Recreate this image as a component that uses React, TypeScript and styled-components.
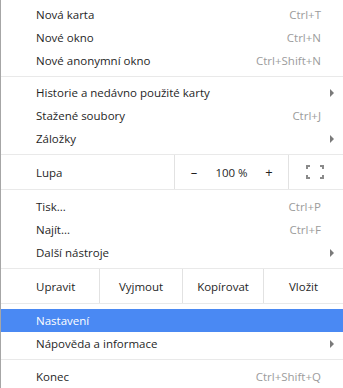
import React from "react";
import styled, { createGlobalStyle } from "styled-components";

const GlobalStyle = createGlobalStyle`
  html, body {
    margin: 0;
    padding: 0;
    background: #ffffff;
  }
  body {
    font-family: "Open Sans", "Noto Sans", sans-serif;
  }
`;

const Menu = styled.div`
  width: 343px;
  height: 388px;
  box-sizing: border-box;
  border-left: 1px solid #a6a6a6;
  background: #ffffff;
  padding-top: 3px;
  font-size: 11.5px;
  color: #1f1f1f;
  overflow: hidden;
`;

const Item = styled.div<{ $active?: boolean }>`
  display: flex;
  align-items: center;
  height: 23px;
  padding: 0 9px 0 35px;
  background: ${(p) => (p.$active ? "#4a89f3" : "transparent")};
  color: ${(p) => (p.$active ? "#ffffff" : "#1f1f1f")};
`;

const Label = styled.span`
  flex: 1;
  white-space: nowrap;
`;

const Shortcut = styled.span`
  color: #9c9c9c;
  margin-right: 13px;
  white-space: nowrap;
`;

const Arrow = styled.span`
  width: 0;
  height: 0;
  border-top: 4px solid transparent;
  border-bottom: 4px solid transparent;
  border-left: 4px solid #7a7a7a;
`;

const Separator = styled.div<{ $gap?: number }>`
  height: 1px;
  background: #e9e9e9;
  margin: 4px 0 ${(p) => p.$gap ?? 4}px;
`;

const ControlRow = styled.div`
  display: flex;
  align-items: stretch;
  height: 34px;
  border-top: 1px solid #e9e9e9;
  border-bottom: 1px solid #e9e9e9;
  margin: 4px 0 5px;
`;

const ControlLabel = styled.div<{ $w: number }>`
  width: ${(p) => p.$w}px;
  flex-shrink: 0;
  display: flex;
  align-items: center;
  padding-left: 35px;
  box-sizing: border-box;
`;

const ZoomBox = styled.div`
  display: flex;
  align-items: center;
  width: 115px;
  border-left: 1px solid #e2e2e2;
  border-right: 1px solid #e2e2e2;
  box-sizing: border-box;
`;

const ZoomButton = styled.span`
  width: 38px;
  text-align: center;
  font-size: 13px;
`;

const ZoomValue = styled.span`
  flex: 1;
  text-align: center;
`;

const FullscreenCell = styled.div`
  flex: 1;
  display: flex;
  align-items: center;
  justify-content: center;
  padding-right: 2px;
`;

const EditCell = styled.div<{ $w: number }>`
  width: ${(p) => p.$w}px;
  flex-shrink: 0;
  display: flex;
  align-items: center;
  justify-content: center;
  border-left: 1px solid #e2e2e2;
  box-sizing: border-box;
`;

const FullscreenIcon = () => (
  <svg width="18" height="14" viewBox="0 0 18 14" fill="#8a8a8a">
    <rect x="0" y="0" width="4" height="2" />
    <rect x="0" y="0" width="2" height="4" />
    <rect x="14" y="0" width="4" height="2" />
    <rect x="16" y="0" width="2" height="4" />
    <rect x="0" y="12" width="4" height="2" />
    <rect x="0" y="10" width="2" height="4" />
    <rect x="14" y="12" width="4" height="2" />
    <rect x="16" y="10" width="2" height="4" />
  </svg>
);

const App = () => {
  return (
    <>
      <GlobalStyle />
      <Menu>
        <Item>
          <Label>Nová karta</Label>
          <Shortcut>Ctrl+T</Shortcut>
        </Item>
        <Item>
          <Label>Nové okno</Label>
          <Shortcut>Ctrl+N</Shortcut>
        </Item>
        <Item>
          <Label>Nové anonymní okno</Label>
          <Shortcut>Ctrl+Shift+N</Shortcut>
        </Item>
        <Separator />
        <Item>
          <Label>Historie a nedávno použité karty</Label>
          <Arrow />
        </Item>
        <Item>
          <Label>Stažené soubory</Label>
          <Shortcut>Ctrl+J</Shortcut>
        </Item>
        <Item>
          <Label>Záložky</Label>
          <Arrow />
        </Item>
        <ControlRow>
          <ControlLabel $w={173}>Lupa</ControlLabel>
          <ZoomBox>
            <ZoomButton>–</ZoomButton>
            <ZoomValue>100 %</ZoomValue>
            <ZoomButton>+</ZoomButton>
          </ZoomBox>
          <FullscreenCell>
            <FullscreenIcon />
          </FullscreenCell>
        </ControlRow>
        <Item>
          <Label>Tisk...</Label>
          <Shortcut>Ctrl+P</Shortcut>
        </Item>
        <Item>
          <Label>Najít...</Label>
          <Shortcut>Ctrl+F</Shortcut>
        </Item>
        <Item>
          <Label>Další nástroje</Label>
          <Arrow />
        </Item>
        <ControlRow>
          <ControlLabel $w={98}>Upravit</ControlLabel>
          <EditCell $w={83}>Vyjmout</EditCell>
          <EditCell $w={81}>Kopírovat</EditCell>
          <EditCell $w={80}>Vložit</EditCell>
        </ControlRow>
        <Item $active>
          <Label>Nastavení</Label>
        </Item>
        <Item>
          <Label>Nápověda a informace</Label>
          <Arrow />
        </Item>
        <Separator $gap={5} />
        <Item>
          <Label>Konec</Label>
          <Shortcut>Ctrl+Shift+Q</Shortcut>
        </Item>
      </Menu>
    </>
  );
};

export default App;
